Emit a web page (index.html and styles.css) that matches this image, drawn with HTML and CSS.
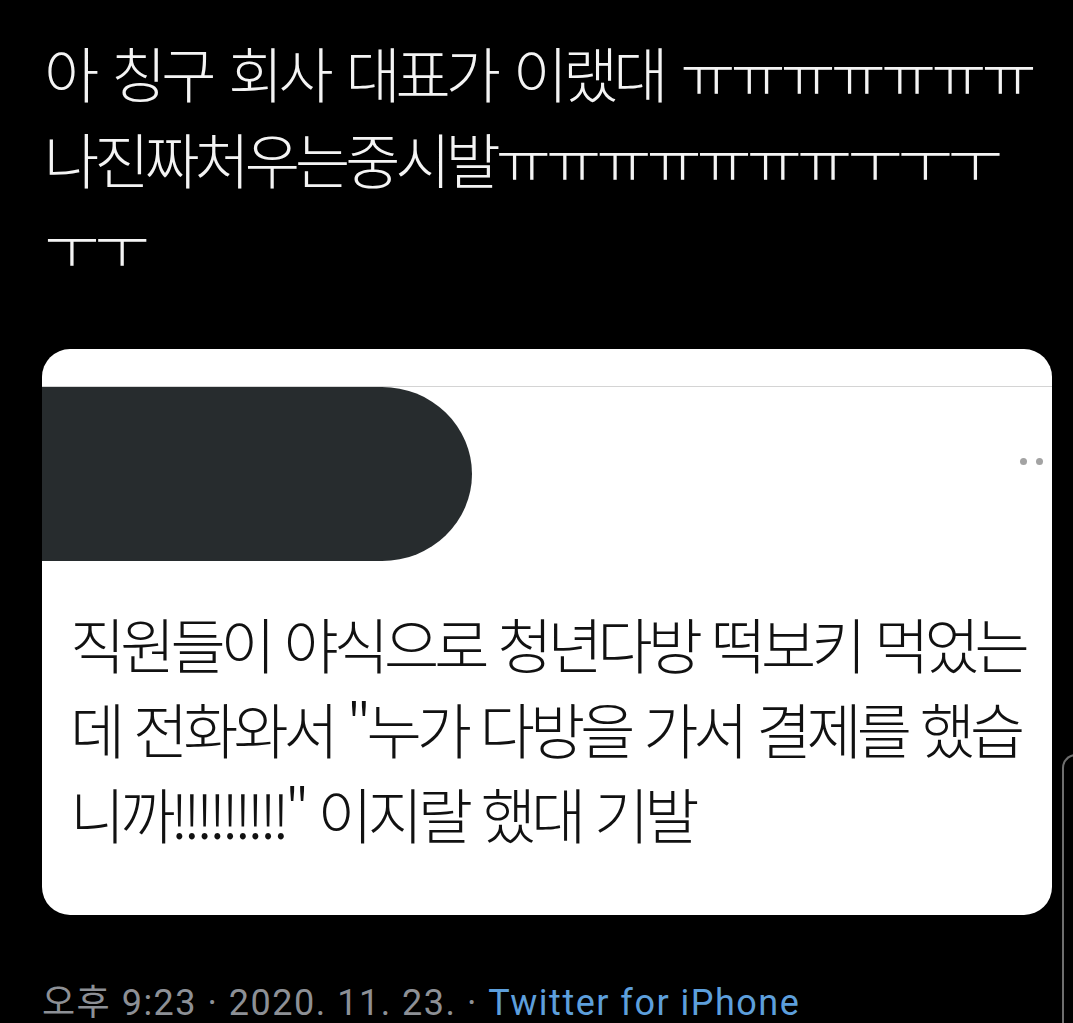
FILE: index.html
```html
<!DOCTYPE html>
<html lang="ko">
<head>
    <meta charset="UTF-8">
    <meta name="viewport" content="width=device-width, initial-scale=1.0">
    <title>트윗</title>
    <link rel="stylesheet" href="styles.css">
</head>
<body>
    <div class="tweet">
        <p class="tweet-text">아 칭구 회사 대표가 이랬대 ㅠㅠㅠㅠㅠㅠㅠ<br>나진짜처우는중시발ㅠㅠㅠㅠㅠㅠㅠㅜㅜㅜ<br>ㅜㅜ</p>

        <div class="quote-card">
            <div class="quote-header"></div>
            <div class="quote-user">
                <div class="redacted"></div>
                <div class="more-dots"><span></span><span></span></div>
            </div>
            <p class="quote-text">직원들이 야식으로 청년다방 떡보키 먹었는<br>데 전화와서 "누가 다방을 가서 결제를 했습<br>니까!!!!!!!!!" 이지랄 했대 기발</p>
        </div>

        <div class="meta">
            <span class="date">오후 9:23 · 2020. 11. 23. · </span><span class="source">Twitter for iPhone</span>
        </div>
    </div>

    <!-- edge of the next card peeking in on the right -->
    <div class="next-card-edge"></div>
</body>
</html>
```

FILE: styles.css
```css
/* Dark tweet screenshot */
body {
    margin: 0;
    padding: 0;
    background-color: #000;
    color: #f2f2f2;
    font-family: 'Noto Sans CJK KR', 'Noto Sans', sans-serif;
    height: 1023px;
    overflow: hidden;
}

.tweet {
    padding: 29px 0 0 44px;
}

.tweet-text {
    margin: 0;
    font-size: 60px;
    font-weight: 300;
    letter-spacing: -5px;
    word-spacing: 5px;
    line-height: 86px;
    color: #f4f4f4;
}

.quote-card {
    width: 1010px;
    height: 566px;
    margin: 62px 0 0 -2px;
    background-color: #fff;
    border-radius: 28px;
    overflow: hidden;
}

.quote-header {
    height: 37px;
    border-bottom: 1px solid #d4d4d4;
}

.quote-user {
    display: flex;
    justify-content: space-between;
    height: 174px;
}

.redacted {
    width: 430px;
    height: 174px;
    background-color: #272c2e;
    border-top-right-radius: 90px 87px;
    border-bottom-right-radius: 90px 87px;
}

.more-dots {
    display: flex;
    gap: 9px;
    margin: 71px 9px 0 0;
}

.more-dots span {
    width: 7px;
    height: 7px;
    border-radius: 50%;
    background-color: #a3a3a3;
}

.quote-text {
    margin: 39px 0 0 28px;
    font-size: 60px;
    font-weight: 300;
    letter-spacing: -5px;
    word-spacing: 1px;
    line-height: 85px;
    color: #111;
}

.meta {
    margin: 70px 0 0 -2px;
    font-family: 'Roboto', 'Noto Sans CJK KR', sans-serif;
    font-size: 36px;
    letter-spacing: 1.5px;
    line-height: 36px;
    white-space: nowrap;
}

.date {
    color: #8d9096;
}

.source {
    color: #5d9fdc;
}

.next-card-edge {
    position: absolute;
    left: 1062px;
    top: 754px;
    width: 30px;
    height: 300px;
    border-left: 2px solid #6e6e6e;
    border-top: 2px solid #6e6e6e;
    border-top-left-radius: 14px;
}
```
